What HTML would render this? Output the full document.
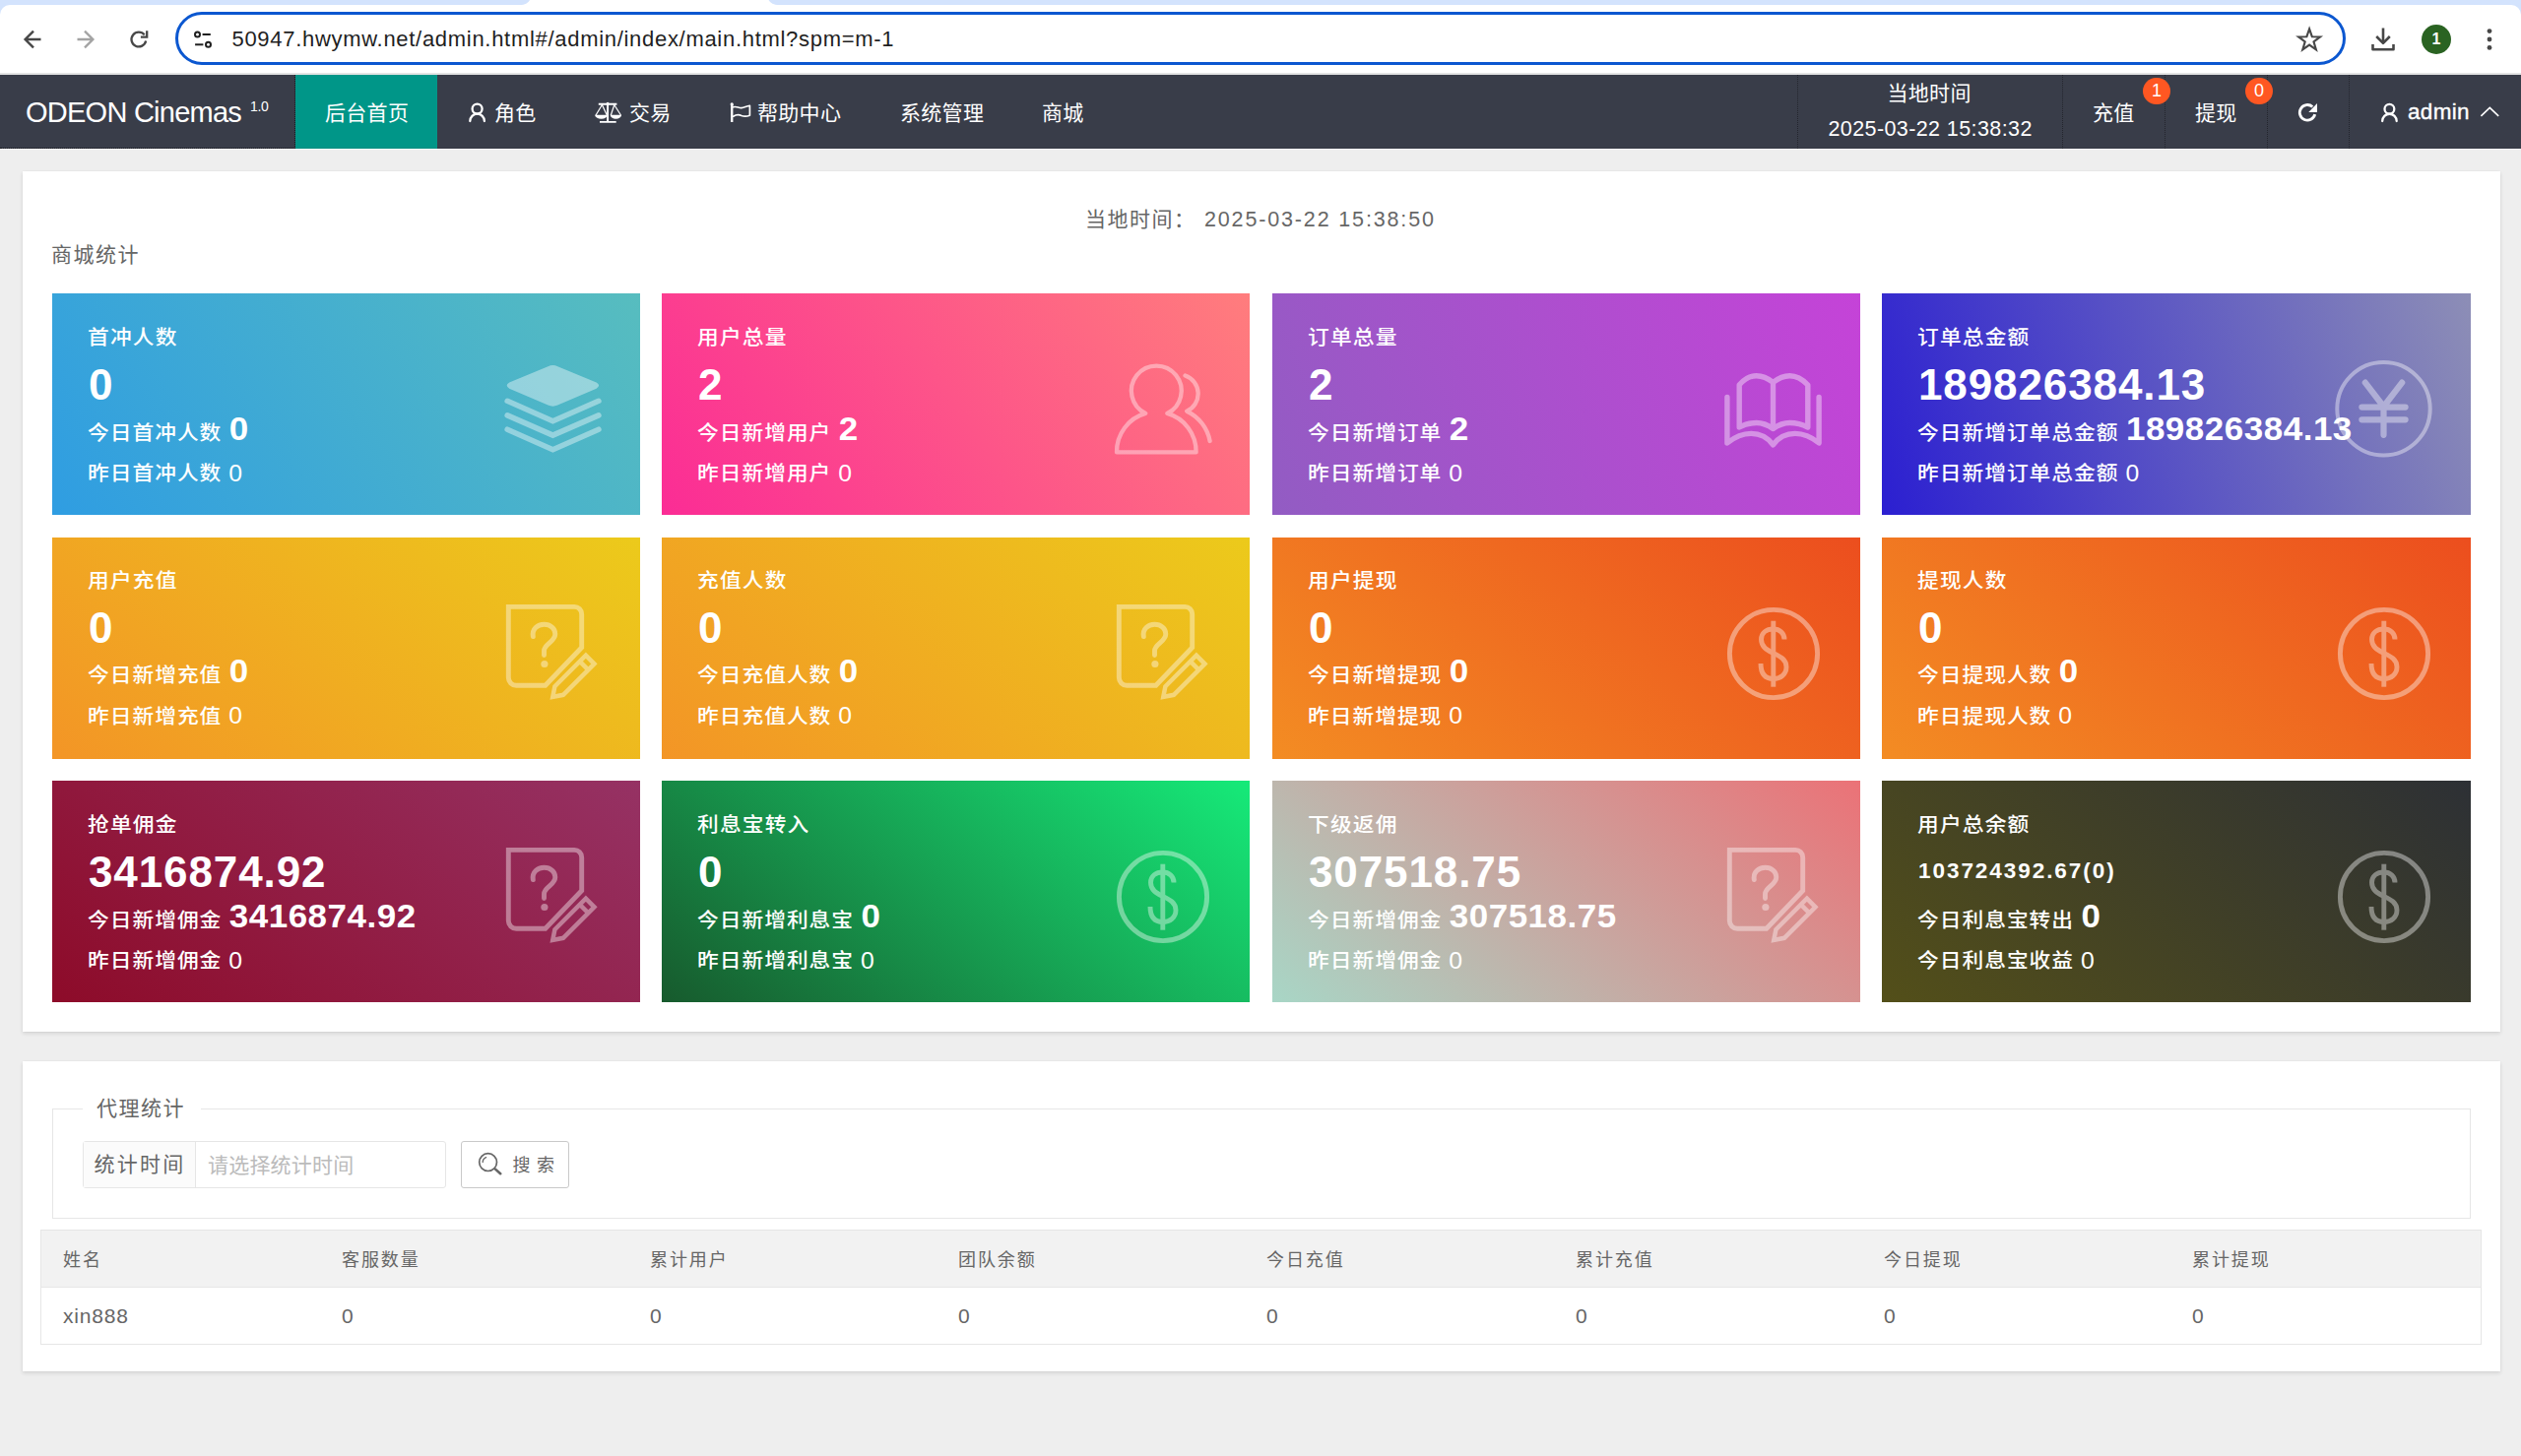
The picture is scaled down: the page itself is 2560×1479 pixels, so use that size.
<!DOCTYPE html><html lang="zh-CN"><head><meta charset="utf-8"><title>ODEON Cinemas</title><style>
*{margin:0;padding:0;box-sizing:border-box}
html,body{width:2560px;height:1479px;overflow:hidden;background:#eeeeee;font-family:"Liberation Sans","Noto Sans CJK SC",sans-serif;color:#666}
.a{position:absolute;white-space:nowrap}
#tabstrip{left:0;top:0;width:2560px;height:16px;background:#d3e3fd}
#toolbar{left:0;top:5px;width:2560px;height:69px;background:#fff;border-radius:10px 10px 0 0}
#tbline{left:0;top:74px;width:2560px;height:2px;background:#e4e4e4}
#omni{left:178px;top:12px;width:2204px;height:54px;border:3px solid #0b57d0;border-radius:27px;background:#fff}
#url{left:235.5px;top:25px;height:30px;line-height:30px;font-size:22px;color:#1f1f1f;letter-spacing:0.7px}
#nav{left:0;top:76px;width:2560px;height:75px;background:#393d49}
#nav .a{color:#fff}
.ni{top:1px;height:75px;line-height:75px;font-size:21px;letter-spacing:.3px}
#home{left:300px;top:0;width:144px;height:75px;background:#009688}
.sep{top:0;width:0;height:75px;border-left:1px dotted rgba(0,0,0,.38)}
.badge{width:28px;height:27px;border-radius:14px;background:#ff5722;color:#fff;text-align:center;font-size:18px;line-height:27px}
.panel{background:#fff;box-shadow:0 2px 4px rgba(0,0,0,.11),0 0 2px rgba(0,0,0,.05)}
.card{width:597px;height:225px;color:#fff;overflow:hidden}
.card .a{color:#fff}
.ct,.c3,.c4{font-weight:500}
.ct{left:36.3px;top:30px;height:30px;line-height:30px;font-size:20.2px;letter-spacing:1.1px;transform:scaleX(1.075);transform-origin:0 0}
.cb{left:37px;top:68px;height:50px;line-height:50px;font-size:44px;font-weight:bold;letter-spacing:.9px}
.cs{left:37px;top:377px;height:30px;line-height:30px;font-size:22.5px;font-weight:bold;letter-spacing:1.95px}
.c3{left:36.1px;top:117.6px;height:40px;line-height:40px;font-size:20.2px;letter-spacing:.95px;transform:scaleX(1.075);transform-origin:0 0}
.c3 b{font-size:32.5px;letter-spacing:.5px;margin-left:6.9px;position:relative;top:0px}
.c4{left:35.8px;top:167px;height:30px;line-height:30px;font-size:20.2px;letter-spacing:.95px;transform:scaleX(1.075);transform-origin:0 0}
.c4 i{font-style:normal;font-size:23px;margin-left:6.4px;position:relative;top:.6px}
.ic{position:absolute;left:437px;top:52px;width:160px;height:130px;overflow:visible}
.th{top:1px;height:58px;line-height:58px;font-size:18px;letter-spacing:1.9px;color:#666}
.td{top:58px;height:58px;line-height:58px;font-size:21px;letter-spacing:.8px;color:#666}
</style></head><body>
<div id="tabstrip" class="a"></div><div id="toolbar" class="a"></div><div id="tbline" class="a"></div>
<svg class="a" style="left:520px;top:0" width="280" height="6" viewBox="520 0 280 6"><path d="M528 5.2Q535.5 4.8 538 0H780.5Q783 4.8 791 5.2V6H528Z" fill="#fff"/></svg>
<div id="omni" class="a"></div>
<div id="url" class="a">50947.hwymw.net/admin.html#/admin/index/main.html?spm=m-1</div>
<svg class="a" style="left:0;top:5px" width="2560" height="69" viewBox="0 5 2560 69" fill="none" stroke-linecap="butt" stroke-linejoin="miter">
<g stroke="#474747" stroke-width="2.4"><path d="M41.5 40H26.5M34 31.6 25.6 40 34 48.4"/></g>
<g stroke="#a3a3a3" stroke-width="2.3"><path d="M78.5 40H93.5M86 31.6 94.4 40 86 48.4"/></g>
<g stroke="#474747" stroke-width="2.3"><path d="M148.15 41.5A7.4 7.4 0 1 1 146.7 35.4"/><path d="M149.2 31.2V37.7H142.9"/></g>
<g stroke="#1f1f1f" stroke-width="2"><circle cx="200.5" cy="35" r="2.5"/><path d="M205.6 35H213.8"/><circle cx="211.5" cy="45.3" r="2.5"/><path d="M198.1 45.3H206.4"/></g>
<path d="M2345.1 29.4 2347.8 37.2 2356.1 37.4 2349.5 42.4 2351.9 50.4 2345.1 45.6 2338.3 50.4 2340.7 42.4 2334.1 37.4 2342.4 37.2Z" stroke="#474747" stroke-width="2.1" stroke-linejoin="miter"/>
<g stroke="#474747" stroke-width="2.6"><path d="M2420 28.5V43.5M2413.2 37 2420 43.8 2426.8 37M2409.5 45V50.3H2430.5V45" stroke-linejoin="round"/></g>
<circle cx="2474" cy="40" r="15" fill="#2a6322"/>
<g fill="#474747"><circle cx="2528" cy="31.6" r="2.4"/><circle cx="2528" cy="40" r="2.4"/><circle cx="2528" cy="48.4" r="2.4"/></g>
</svg>
<div class="a" style="left:2464px;top:29px;width:20px;height:22px;line-height:22px;text-align:center;font-size:16px;font-weight:bold;color:#fff">1</div>
<div id="nav" class="a">
<div class="a" style="left:26px;top:1.5px;height:75px;line-height:73px;font-size:29px;letter-spacing:-.75px">ODEON Cinemas</div>
<div class="a" style="left:254px;top:21.7px;height:20px;line-height:20px;font-size:14px;letter-spacing:-.3px">1.0</div>
<div class="a" style="left:0;top:0;width:300px;height:75px;border-right:1px dotted rgba(0,0,0,.55);border-bottom:1px dotted rgba(0,0,0,.55)"></div>
<div id="home" class="a"></div>
<div class="a" style="left:300px;top:74px;width:2260px;height:1px;background:rgba(0,0,0,.06)"></div>
<div class="a" style="left:0;top:75px;width:2560px;height:1px;background:#fbfbfb"></div>
<div class="a ni" style="left:330px">后台首页</div>
<div class="a ni" style="left:502px">角色</div>
<div class="a ni" style="left:639px">交易</div>
<div class="a ni" style="left:769px">帮助中心</div>
<div class="a ni" style="left:914px">系统管理</div>
<div class="a ni" style="left:1058px">商城</div>
<div class="a sep" style="left:1825px"></div>
<div class="a sep" style="left:2094px"></div>
<div class="a sep" style="left:2198px"></div>
<div class="a sep" style="left:2302px"></div>
<div class="a sep" style="left:2385px"></div>
<div class="a" style="left:1916.5px;top:4.4px;height:30px;line-height:30px;font-size:21px;letter-spacing:.3px">当地时间</div>
<div class="a" style="left:1856.5px;top:39.6px;height:30px;line-height:30px;font-size:21.5px;letter-spacing:.4px">2025-03-22 15:38:32</div>
<div class="a ni" style="left:2125px">充值</div>
<div class="a ni" style="left:2229px">提现</div>
<div class="a badge" style="left:2176px;top:3px">1</div>
<div class="a badge" style="left:2280px;top:3px">0</div>
<div class="a" style="left:2445px;top:1.2px;height:75px;line-height:73px;font-size:22.5px;letter-spacing:.3px;-webkit-text-stroke:.35px #fff">admin</div>
<svg class="a" style="left:0;top:0" width="2560" height="75" viewBox="0 76 2560 75" fill="none" stroke="#fff" stroke-linecap="round" stroke-linejoin="round">
<g stroke-width="2.3"><circle cx="484.6" cy="110.6" r="5"/><path d="M477.3 123A7.3 7.3 0 0 1 491.9 123"/></g>
<g stroke-width="1.9" stroke-linecap="butt"><path d="M607.8 105.8H626.4M617.1 105V123.6M609 123.9H625.7"/></g><circle cx="617.1" cy="105.2" r="1.5" fill="#fff" stroke="none"/>
<g stroke-width="1.2"><path d="M611.4 106.5 605.2 116.8M611.4 106.5 616.2 116.8M623.8 106.5 620.4 116.8M623.8 106.5 630.3 116.8"/></g>
<path d="M604.1 116.7H617A6.45 4.1 0 0 1 604.1 116.7ZM619.7 116.7H631.1A5.7 4.1 0 0 1 619.7 116.7Z" fill="#fff" stroke="none"/>
<g stroke-width="2.4" stroke-linecap="butt"><path d="M743.2 106V124"/></g><circle cx="743.2" cy="105.9" r="1.6" fill="#fff" stroke="none"/>
<g stroke-width="1.7"><path d="M744.6 108.8C748 107.5 750 110 753 109.6 756 109.3 758 107.8 761.4 107.4V117.3C758 118.5 756 118.8 753 117.5 750 116 748 116 744.6 118.2"/></g>
<g stroke-width="2.8" stroke-linecap="butt"><path d="M2350.7 116.2A7.8 7.8 0 1 1 2348.3 108.5"/></g><path d="M2353 105V113.9H2344.3Z" fill="#fff" stroke="none"/>
<g stroke-width="2.3"><circle cx="2426.4" cy="110.7" r="4.9"/><path d="M2419.2 123A7.25 7.25 0 0 1 2433.7 123"/></g>
<path d="M2519.4 117.8 2528.3 109.3 2537.2 117.8" stroke-width="1.6" stroke-linejoin="miter" stroke-linecap="butt"/>
</svg>
</div>
<div class="a panel" style="left:23px;top:174px;width:2516px;height:874px"></div>
<div class="a" style="left:1102px;top:208px;height:30px;line-height:30px;font-size:21px;letter-spacing:1.5px;color:#666">当地时间：</div>
<div class="a" style="left:1223px;top:207.5px;height:30px;line-height:30px;font-size:21.5px;letter-spacing:1.85px;color:#666">2025-03-22 15:38:50</div>
<div class="a" style="left:52px;top:243.6px;height:30px;line-height:30px;font-size:21px;letter-spacing:1.5px;color:#666">商城统计</div>
<div class="a card" style="left:53px;top:298px;width:597px;background:linear-gradient(-125deg,#57bdbf,#2f9de2)">
<div class="a" style="left:0;top:0px;width:100%;height:100%">
<div class="a ct">首冲人数</div>
<div class="a cb">0</div>
<div class="a c3">今日首冲人数<b>0</b></div>
<div class="a c4">昨日首冲人数<i>0</i></div>
</div>
<svg class="ic" style="left:437px;top:52px" viewBox="0 0 160 130"><g opacity=".4"><g fill="#fff"><path d="M66.5 22.2Q71.4 19.9 76.3 22.2L115.6 38.4Q120.6 41.6 115.6 44.8L76.3 61.6Q71.4 63.9 66.5 61.6L27.2 44.8Q22.2 41.6 27.2 38.4Z"/></g>
<g fill="none" stroke="#fff" stroke-width="5.6" stroke-linecap="round" stroke-linejoin="miter"><path d="M25.2 57.3 71.4 77.8 117.9 57.3"/><path d="M25.2 71.9 71.4 92.1 117.9 71.9"/><path d="M25.2 86.2 71.4 106.7 117.9 86.2"/></g></g></svg>
</div>
<div class="a card" style="left:672px;top:298px;width:597px;background:linear-gradient(-125deg,#ff7d7d,#fb2c95)">
<div class="a" style="left:0;top:0px;width:100%;height:100%">
<div class="a ct">用户总量</div>
<div class="a cb">2</div>
<div class="a c3">今日新增用户<b>2</b></div>
<div class="a c4">昨日新增用户<i>0</i></div>
</div>
<svg class="ic" style="left:438px;top:52px" viewBox="0 0 160 130"><g opacity=".4"><g fill="none" stroke="#fff" stroke-width="4.3" stroke-linecap="round" stroke-linejoin="round"><path d="M24 109.4H104.6A40.3 40.3 0 0 0 75.3 69.9A25.4 25.4 0 1 0 53.3 69.9A40.3 40.3 0 0 0 24 109.4Z"/><path d="M93.5 31.5A19.5 19.5 0 0 1 95.2 67.7A42 42 0 0 1 118.6 98"/></g></g></svg>
</div>
<div class="a card" style="left:1292px;top:298px;width:597px;background:linear-gradient(-113deg,#c543d8,#925cc3)">
<div class="a" style="left:0;top:0px;width:100%;height:100%">
<div class="a ct">订单总量</div>
<div class="a cb">2</div>
<div class="a c3">今日新增订单<b>2</b></div>
<div class="a c4">昨日新增订单<i>0</i></div>
</div>
<svg class="ic" style="left:438px;top:52px" viewBox="0 0 160 130"><g opacity=".4"><g fill="none" stroke="#fff" stroke-width="5.4" stroke-linecap="round" stroke-linejoin="round"><path d="M23.9 53.5V100Q36 90.4 48.2 90.4Q62 90.4 70.5 101.8Q79 90.4 92.9 90.4Q105 90.4 117.1 100V53.5"/><path d="M70.5 38.4Q62 31.7 53.6 31.7Q44 31.7 36.2 41V84Q44 79.5 53.6 79.5Q62 79.5 70.5 85.5Q79 79.5 87.4 79.5Q97 79.5 105.8 84V41Q97 31.7 87.4 31.7Q79 31.7 70.5 38.4V85.5"/></g></g></svg>
</div>
<div class="a card" style="left:1911px;top:298px;width:598px;background:linear-gradient(-108deg,#8d8eb6,#2b1fd1)">
<div class="a" style="left:0;top:0px;width:100%;height:100%">
<div class="a ct">订单总金额</div>
<div class="a cb">189826384.13</div>
<div class="a c3">今日新增订单总金额<b>189826384.13</b></div>
<div class="a c4">昨日新增订单总金额<i>0</i></div>
</div>
<svg class="ic" style="left:439px;top:52px" viewBox="0 0 160 130"><g opacity=".4"><g fill="none" stroke="#fff" stroke-linecap="round" stroke-linejoin="round"><circle cx="70.5" cy="65.2" r="47.2" stroke-width="4"/><g stroke-width="6.2"><path d="M51.8 38.6 70.5 63 89.2 38.6M70.5 63V91.8M48.4 63.6H92.6M48.4 76.3H92.6"/></g></g></g></svg>
</div>
<div class="a card" style="left:53px;top:546px;width:597px;background:linear-gradient(-141deg,#ecca1b,#f39526)">
<div class="a" style="left:0;top:-1.2px;width:100%;height:100%">
<div class="a ct">用户充值</div>
<div class="a cb">0</div>
<div class="a c3">今日新增充值<b>0</b></div>
<div class="a c4">昨日新增充值<i>0</i></div>
</div>
<svg class="ic" style="left:437px;top:49px" viewBox="0 0 160 130"><g opacity=".4"><g fill="none" stroke="#fff" stroke-width="4.9" stroke-linejoin="miter"><path d="M26.3 21.4H93.2A7.5 7.5 0 0 1 100.7 28.9V62.7L63.8 101.3H34.3A8 8 0 0 1 26.3 93.3Z"/><path d="M51.3 51.6C50 44 56 39.3 62.5 39.3 69 39.3 73.8 43.5 73.8 49 73.8 57 62.5 59 62.5 66V70.5" stroke-linecap="round"/><g transform="translate(110.75 73.45) rotate(135)" stroke-width="4.5"><path d="M2.25 -6.05H46.8L55.8 0 46.8 6.05H2.25ZM10.9 -6V6"/></g></g><circle cx="62.9" cy="79.5" r="3.6" fill="#fff"/></g></svg>
</div>
<div class="a card" style="left:672px;top:546px;width:597px;background:linear-gradient(-141deg,#ecca1b,#f39526)">
<div class="a" style="left:0;top:-1.2px;width:100%;height:100%">
<div class="a ct">充值人数</div>
<div class="a cb">0</div>
<div class="a c3">今日充值人数<b>0</b></div>
<div class="a c4">昨日充值人数<i>0</i></div>
</div>
<svg class="ic" style="left:438px;top:49px" viewBox="0 0 160 130"><g opacity=".4"><g fill="none" stroke="#fff" stroke-width="4.9" stroke-linejoin="miter"><path d="M26.3 21.4H93.2A7.5 7.5 0 0 1 100.7 28.9V62.7L63.8 101.3H34.3A8 8 0 0 1 26.3 93.3Z"/><path d="M51.3 51.6C50 44 56 39.3 62.5 39.3 69 39.3 73.8 43.5 73.8 49 73.8 57 62.5 59 62.5 66V70.5" stroke-linecap="round"/><g transform="translate(110.75 73.45) rotate(135)" stroke-width="4.5"><path d="M2.25 -6.05H46.8L55.8 0 46.8 6.05H2.25ZM10.9 -6V6"/></g></g><circle cx="62.9" cy="79.5" r="3.6" fill="#fff"/></g></svg>
</div>
<div class="a card" style="left:1292px;top:546px;width:597px;background:linear-gradient(-141deg,#ec4e1e,#f38c23)">
<div class="a" style="left:0;top:-1.2px;width:100%;height:100%">
<div class="a ct">用户提现</div>
<div class="a cb">0</div>
<div class="a c3">今日新增提现<b>0</b></div>
<div class="a c4">昨日新增提现<i>0</i></div>
</div>
<svg class="ic" style="left:438px;top:49px" viewBox="0 0 160 130"><g opacity=".4"><g fill="none" stroke="#fff" stroke-width="4.9"><circle cx="71" cy="69" r="44.6"/><path d="M70.8 35.7V102.7"/><path d="M82 54.5C82 48 77 44 70.8 44 63.5 44 58.5 48 58.5 54.5 58.5 62.5 65 65.5 70.8 68.5 77 71.5 84 74.5 84 82.5 84 90 78 94.5 70.8 94.5 63 94.5 58 90 58 79"/></g></g></svg>
</div>
<div class="a card" style="left:1911px;top:546px;width:598px;background:linear-gradient(-141deg,#ec4e1e,#f38c23)">
<div class="a" style="left:0;top:-1.2px;width:100%;height:100%">
<div class="a ct">提现人数</div>
<div class="a cb">0</div>
<div class="a c3">今日提现人数<b>0</b></div>
<div class="a c4">昨日提现人数<i>0</i></div>
</div>
<svg class="ic" style="left:439px;top:49px" viewBox="0 0 160 130"><g opacity=".4"><g fill="none" stroke="#fff" stroke-width="4.9"><circle cx="71" cy="69" r="44.6"/><path d="M70.8 35.7V102.7"/><path d="M82 54.5C82 48 77 44 70.8 44 63.5 44 58.5 48 58.5 54.5 58.5 62.5 65 65.5 70.8 68.5 77 71.5 84 74.5 84 82.5 84 90 78 94.5 70.8 94.5 63 94.5 58 90 58 79"/></g></g></svg>
</div>
<div class="a card" style="left:53px;top:793px;width:597px;background:linear-gradient(-141deg,#963264,#8d0b29)">
<div class="a" style="left:0;top:0px;width:100%;height:100%">
<div class="a ct">抢单佣金</div>
<div class="a cb">3416874.92</div>
<div class="a c3">今日新增佣金<b>3416874.92</b></div>
<div class="a c4">昨日新增佣金<i>0</i></div>
</div>
<svg class="ic" style="left:437px;top:49px" viewBox="0 0 160 130"><g opacity=".4"><g fill="none" stroke="#fff" stroke-width="4.9" stroke-linejoin="miter"><path d="M26.3 21.4H93.2A7.5 7.5 0 0 1 100.7 28.9V62.7L63.8 101.3H34.3A8 8 0 0 1 26.3 93.3Z"/><path d="M51.3 51.6C50 44 56 39.3 62.5 39.3 69 39.3 73.8 43.5 73.8 49 73.8 57 62.5 59 62.5 66V70.5" stroke-linecap="round"/><g transform="translate(110.75 73.45) rotate(135)" stroke-width="4.5"><path d="M2.25 -6.05H46.8L55.8 0 46.8 6.05H2.25ZM10.9 -6V6"/></g></g><circle cx="62.9" cy="79.5" r="3.6" fill="#fff"/></g></svg>
</div>
<div class="a card" style="left:672px;top:793px;width:597px;background:linear-gradient(-141deg,#16ea79,#175a2d)">
<div class="a" style="left:0;top:0px;width:100%;height:100%">
<div class="a ct">利息宝转入</div>
<div class="a cb">0</div>
<div class="a c3">今日新增利息宝<b>0</b></div>
<div class="a c4">昨日新增利息宝<i>0</i></div>
</div>
<svg class="ic" style="left:438px;top:49px" viewBox="0 0 160 130"><g opacity=".4"><g fill="none" stroke="#fff" stroke-width="4.9"><circle cx="71" cy="69" r="44.6"/><path d="M70.8 35.7V102.7"/><path d="M82 54.5C82 48 77 44 70.8 44 63.5 44 58.5 48 58.5 54.5 58.5 62.5 65 65.5 70.8 68.5 77 71.5 84 74.5 84 82.5 84 90 78 94.5 70.8 94.5 63 94.5 58 90 58 79"/></g></g></svg>
</div>
<div class="a card" style="left:1292px;top:793px;width:597px;background:linear-gradient(-141deg,#eb7277,#a8d6c6)">
<div class="a" style="left:0;top:0px;width:100%;height:100%">
<div class="a ct">下级返佣</div>
<div class="a cb">307518.75</div>
<div class="a c3">今日新增佣金<b>307518.75</b></div>
<div class="a c4">昨日新增佣金<i>0</i></div>
</div>
<svg class="ic" style="left:438px;top:49px" viewBox="0 0 160 130"><g opacity=".4"><g fill="none" stroke="#fff" stroke-width="4.9" stroke-linejoin="miter"><path d="M26.3 21.4H93.2A7.5 7.5 0 0 1 100.7 28.9V62.7L63.8 101.3H34.3A8 8 0 0 1 26.3 93.3Z"/><path d="M51.3 51.6C50 44 56 39.3 62.5 39.3 69 39.3 73.8 43.5 73.8 49 73.8 57 62.5 59 62.5 66V70.5" stroke-linecap="round"/><g transform="translate(110.75 73.45) rotate(135)" stroke-width="4.5"><path d="M2.25 -6.05H46.8L55.8 0 46.8 6.05H2.25ZM10.9 -6V6"/></g></g><circle cx="62.9" cy="79.5" r="3.6" fill="#fff"/></g></svg>
</div>
<div class="a card" style="left:1911px;top:793px;width:598px;background:linear-gradient(-141deg,#2d3035,#534f19)">
<div class="a" style="left:0;top:0px;width:100%;height:100%">
<div class="a ct">用户总余额</div>
<div class="a cs" style="top:77.4px">103724392.67(0)</div>
<div class="a c3">今日利息宝转出<b>0</b></div>
<div class="a c4">今日利息宝收益<i>0</i></div>
</div>
<svg class="ic" style="left:439px;top:49px" viewBox="0 0 160 130"><g opacity=".4"><g fill="none" stroke="#fff" stroke-width="4.9"><circle cx="71" cy="69" r="44.6"/><path d="M70.8 35.7V102.7"/><path d="M82 54.5C82 48 77 44 70.8 44 63.5 44 58.5 48 58.5 54.5 58.5 62.5 65 65.5 70.8 68.5 77 71.5 84 74.5 84 82.5 84 90 78 94.5 70.8 94.5 63 94.5 58 90 58 79"/></g></g></svg>
</div>
<div class="a panel" style="left:23px;top:1078px;width:2516px;height:314.5px"></div>
<div class="a" style="left:53px;top:1126px;width:2456px;height:112px;border:1px solid #e6e6e6"></div>
<div class="a" style="left:84px;top:1110px;width:120px;height:32px;background:#fff"></div>
<div class="a" style="left:98px;top:1111px;height:30px;line-height:30px;font-size:21px;letter-spacing:1.5px;color:#666">代理统计</div>
<div class="a" style="left:84px;top:1159px;width:369px;height:48px;border:1px solid #e6e6e6;border-radius:3px;background:#fff"></div>
<div class="a" style="left:85px;top:1160px;width:114px;height:46px;background:#fbfbfb;border-right:1px solid #e6e6e6"></div>
<div class="a" style="left:95.6px;top:1168px;height:30px;line-height:30px;font-size:21px;letter-spacing:2.2px;color:#666">统计时间</div>
<div class="a" style="left:211px;top:1169px;height:30px;line-height:30px;font-size:21px;letter-spacing:.2px;color:#bbb">请选择统计时间</div>
<div class="a" style="left:468px;top:1159px;width:110px;height:48px;border:1px solid #c9c9c9;border-radius:3px;background:#fff"></div>
<svg class="a" style="left:480px;top:1165px" width="36" height="36" viewBox="480 1165 36 36" fill="none" stroke="#666" stroke-width="1.7" stroke-linecap="round"><circle cx="495.6" cy="1180.6" r="8.9"/><path d="M490.2 1180.6A5.4 5.4 0 0 1 493.6 1175.6" stroke-width="1.3"/><path d="M503 1187.6 508.2 1192.2" stroke-width="2.6"/></svg>
<div class="a" style="left:520.5px;top:1168.5px;height:30px;line-height:30px;font-size:18px;letter-spacing:.7px;color:#666">搜 索</div>
<div class="a" style="left:41px;top:1249px;width:2479px;height:117px;border:1px solid #e6e6e6;background:#fff">
<div class="a" style="left:0;top:0;width:2477px;height:58px;background:#f2f2f2;border-bottom:1px solid #e6e6e6"></div>
<div class="a th" style="left:22px">姓名</div>
<div class="a th" style="left:305px">客服数量</div>
<div class="a th" style="left:618px">累计用户</div>
<div class="a th" style="left:931px">团队余额</div>
<div class="a th" style="left:1244px">今日充值</div>
<div class="a th" style="left:1558px">累计充值</div>
<div class="a th" style="left:1871px">今日提现</div>
<div class="a th" style="left:2184px">累计提现</div>
<div class="a td" style="left:22px">xin888</div>
<div class="a td" style="left:305px">0</div>
<div class="a td" style="left:618px">0</div>
<div class="a td" style="left:931px">0</div>
<div class="a td" style="left:1244px">0</div>
<div class="a td" style="left:1558px">0</div>
<div class="a td" style="left:1871px">0</div>
<div class="a td" style="left:2184px">0</div>
</div>
</body></html>
